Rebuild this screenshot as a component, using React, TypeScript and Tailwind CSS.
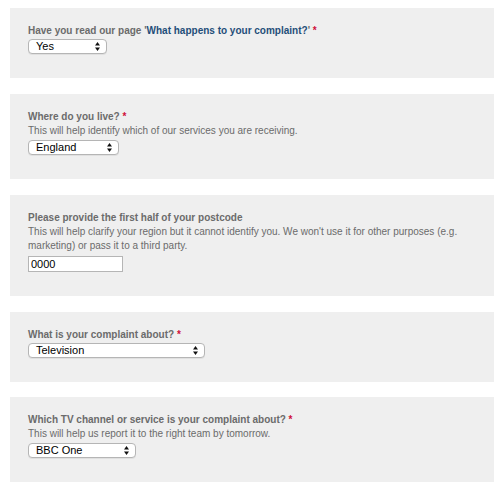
import type { ReactNode } from 'react';

function Arrows() {
  return (
    <svg className="w-[5px] h-[9px]" viewBox="0 0 5 9" fill="#111">
      <path d="M2.5 0 L5 3.5 L0 3.5 Z" />
      <path d="M0 5.5 L5 5.5 L2.5 9 Z" />
    </svg>
  );
}

function FakeSelect({ value, width }: { value: string; width: string }) {
  return (
    <div
      className={`${width} h-[15px] flex items-center justify-between pl-[7px] pr-[6px] bg-white border border-[#b5b5b5] rounded-[4px] shadow-[0_1px_0_rgba(0,0,0,0.06)] text-[11px] text-black leading-none`}
    >
      <span>{value}</span>
      <Arrows />
    </div>
  );
}

function Panel({ children }: { children: ReactNode }) {
  return <div className="bg-[#efefef] pl-[18px] pr-[12px] pt-[16px] pb-[24px]">{children}</div>;
}

function Label({ children, required }: { children: ReactNode; required?: boolean }) {
  return (
    <div className="font-bold text-[#6b6b6b] leading-[14px]">
      {children}
      {required && <span className="text-[#d0103a]"> *</span>}
    </div>
  );
}

function Hint({ children }: { children: ReactNode }) {
  return <div className="text-[#6b6b6b] leading-[14px]">{children}</div>;
}

export default function App() {
  return (
    <div
      className="w-[484px] ml-[10px] pt-[8px] flex flex-col gap-[16px] text-[10px]"
      style={{ fontFamily: '"Liberation Sans", Arial, sans-serif' }}
    >
      <Panel>
        <Label required>
          Have you read our page '<span className="text-[#1f4e79]">What happens to your complaint?</span>'
        </Label>
        <div className="mt-[1px]">
          <FakeSelect value="Yes" width="w-[79px]" />
        </div>
      </Panel>

      <Panel>
        <Label required>Where do you live?</Label>
        <Hint>This will help identify which of our services you are receiving.</Hint>
        <div className="mt-[2px]">
          <FakeSelect value="England" width="w-[91px]" />
        </div>
      </Panel>

      <Panel>
        <Label>Please provide the first half of your postcode</Label>
        <Hint>
          This will help clarify your region but it cannot identify you. We won't use it for other purposes (e.g.
          marketing) or pass it to a third party.
        </Hint>
        <input
          defaultValue="0000"
          className="mt-[3px] block w-[95px] h-[16px] px-[2px] bg-white border border-[#b5b5b5] text-[11px] text-black outline-none"
        />
      </Panel>

      <Panel>
        <Label required>What is your complaint about?</Label>
        <div className="mt-[1px]">
          <FakeSelect value="Television" width="w-[177px]" />
        </div>
      </Panel>

      <div className="-mt-px">
        <Panel>
          <Label required>Which TV channel or service is your complaint about?</Label>
          <Hint>This will help us report it to the right team by tomorrow.</Hint>
          <div className="mt-[2px]">
            <FakeSelect value="BBC One" width="w-[108px]" />
          </div>
        </Panel>
      </div>
    </div>
  );
}
